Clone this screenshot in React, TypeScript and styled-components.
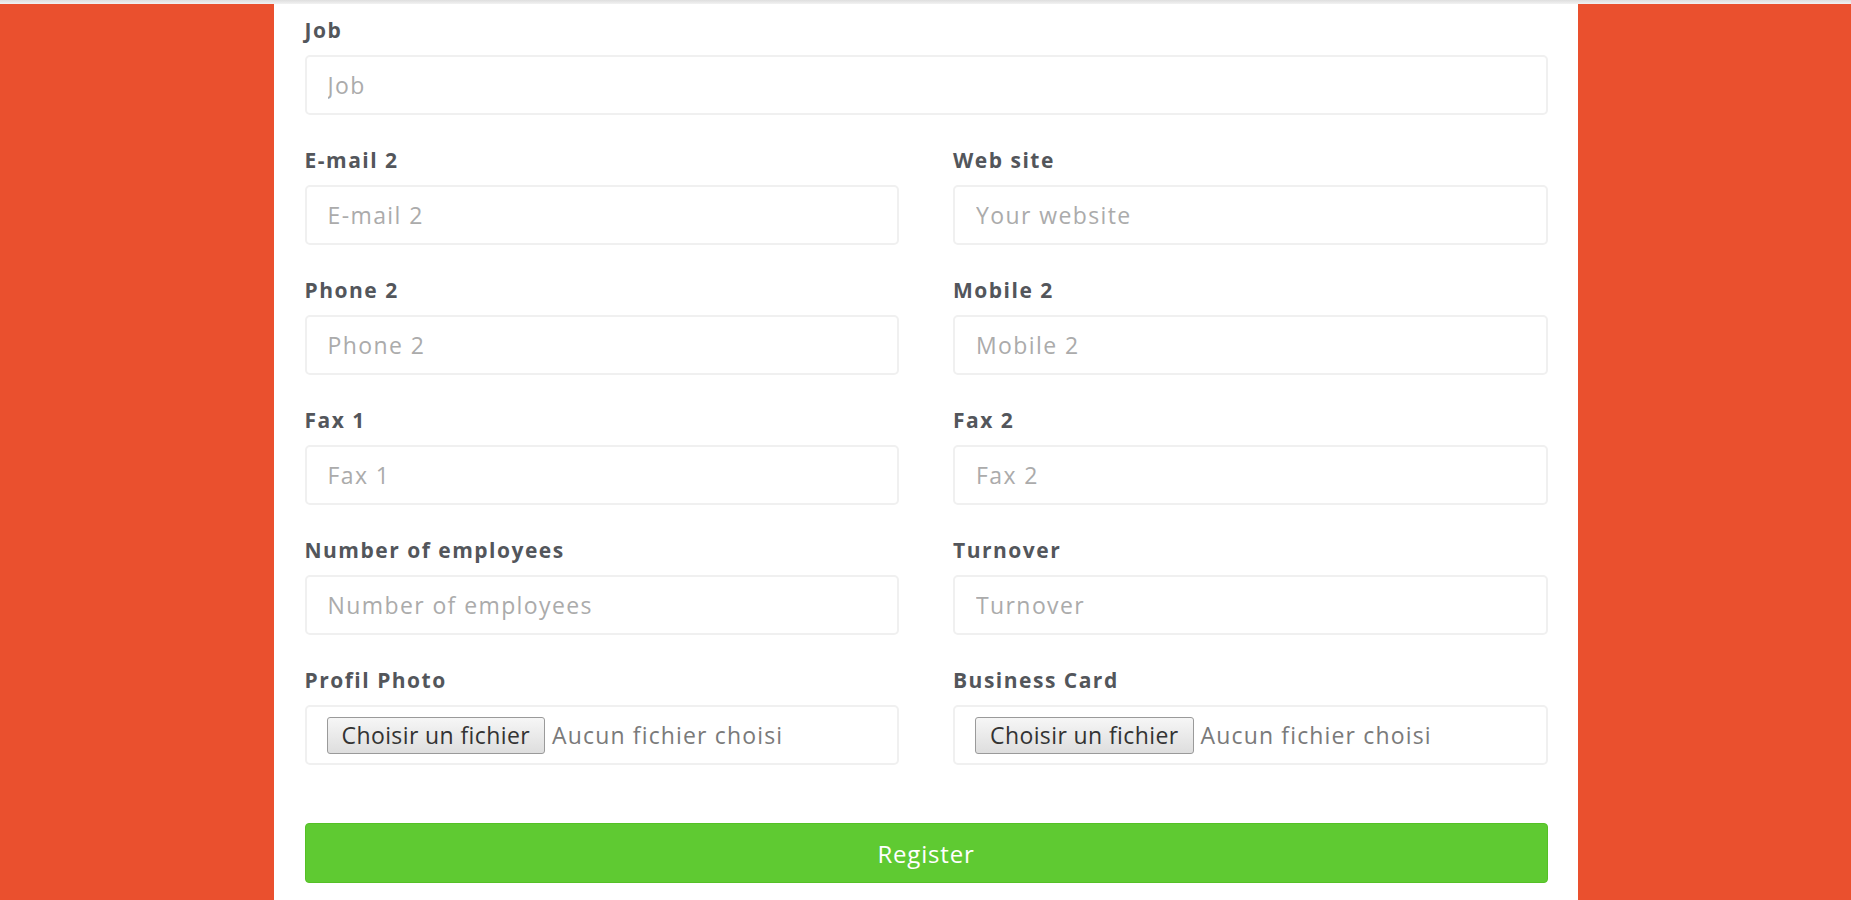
import React from "react";
import styled, { createGlobalStyle } from "styled-components";

const Global = createGlobalStyle`
  html, body { margin: 0; padding: 0; }
  body {
    background: #ea502e;
    font-family: "Open Sans", "Liberation Sans", sans-serif;
    overflow: hidden;
  }
  * { box-sizing: border-box; }
`;

const Page = styled.div`
  display: flex;
  flex-direction: column;
  min-height: 900px;
`;

const TopStrip = styled.div`
  height: 4px;
  background: linear-gradient(#dedede, #f2f2f2);
`;

const Card = styled.main`
  width: 1304px;
  margin: 0 auto;
  flex: 1;
  background: #ffffff;
  padding: 12px 30px 40px 31px;
`;

const Grid = styled.div`
  display: grid;
  grid-template-columns: 1fr 1fr;
  column-gap: 54px;
  row-gap: 31px;
`;

const Field = styled.div<{ $full?: boolean }>`
  display: flex;
  flex-direction: column;
  grid-column: ${(p) => (p.$full ? "1 / -1" : "auto")};
`;

const Label = styled.label`
  font-size: 21px;
  font-weight: 700;
  letter-spacing: 1.5px;
  line-height: 28px;
  color: #53565b;
  margin-bottom: 11px;
`;

const Input = styled.input`
  height: 60px;
  width: 100%;
  border: 2px solid #f0f0f0;
  border-radius: 5px;
  padding: 0 21px;
  font-family: "Open Sans", "Liberation Sans", sans-serif;
  font-size: 23px;
  letter-spacing: 1.4px;
  color: #555;
  background: #fff;
  outline: none;
  &::placeholder {
    color: #ababab;
    font-weight: 400;
  }
`;

const FileBox = styled.div`
  height: 60px;
  border: 2px solid #f0f0f0;
  border-radius: 5px;
  padding: 0 20px;
  display: flex;
  align-items: center;
  gap: 7px;
`;

const FileButton = styled.button`
  height: 37px;
  padding: 0 14px;
  border: 1px solid #9a9a9a;
  border-radius: 3px;
  background: linear-gradient(#f6f6f6, #dedede);
  font-family: "Open Sans", "Liberation Sans", sans-serif;
  font-size: 23px;
  letter-spacing: 0.4px;
  color: #333;
  cursor: pointer;
  white-space: nowrap;
`;

const FileText = styled.span`
  font-size: 23px;
  letter-spacing: 1.15px;
  color: #7a7a7a;
  white-space: nowrap;
`;

const Submit = styled.button`
  margin-top: 58px;
  width: 100%;
  height: 60px;
  border: 1px solid #55c026;
  border-radius: 4px;
  background: #5fca32;
  color: #ffffff;
  font-family: "Open Sans", "Liberation Sans", sans-serif;
  font-size: 24px;
  letter-spacing: 0.8px;
  cursor: pointer;
`;

type Pair = { label: string; placeholder: string };

const rows: [Pair, Pair][] = [
  [
    { label: "E-mail 2", placeholder: "E-mail 2" },
    { label: "Web site", placeholder: "Your website" },
  ],
  [
    { label: "Phone 2", placeholder: "Phone 2" },
    { label: "Mobile 2", placeholder: "Mobile 2" },
  ],
  [
    { label: "Fax 1", placeholder: "Fax 1" },
    { label: "Fax 2", placeholder: "Fax 2" },
  ],
  [
    { label: "Number of employees", placeholder: "Number of employees" },
    { label: "Turnover", placeholder: "Turnover" },
  ],
];

const FilePicker: React.FC<{ label: string }> = ({ label }) => (
  <Field>
    <Label>{label}</Label>
    <FileBox>
      <FileButton type="button">Choisir un fichier</FileButton>
      <FileText>Aucun fichier choisi</FileText>
    </FileBox>
  </Field>
);

export default function App() {
  return (
    <>
      <Global />
      <Page>
        <TopStrip />
        <Card>
          <Grid>
            <Field $full>
              <Label>Job</Label>
              <Input placeholder="Job" />
            </Field>
            {rows.flat().map((f) => (
              <Field key={f.label}>
                <Label>{f.label}</Label>
                <Input placeholder={f.placeholder} />
              </Field>
            ))}
            <FilePicker label="Profil Photo" />
            <FilePicker label="Business Card" />
          </Grid>
          <Submit type="button">Register</Submit>
        </Card>
      </Page>
    </>
  );
}
